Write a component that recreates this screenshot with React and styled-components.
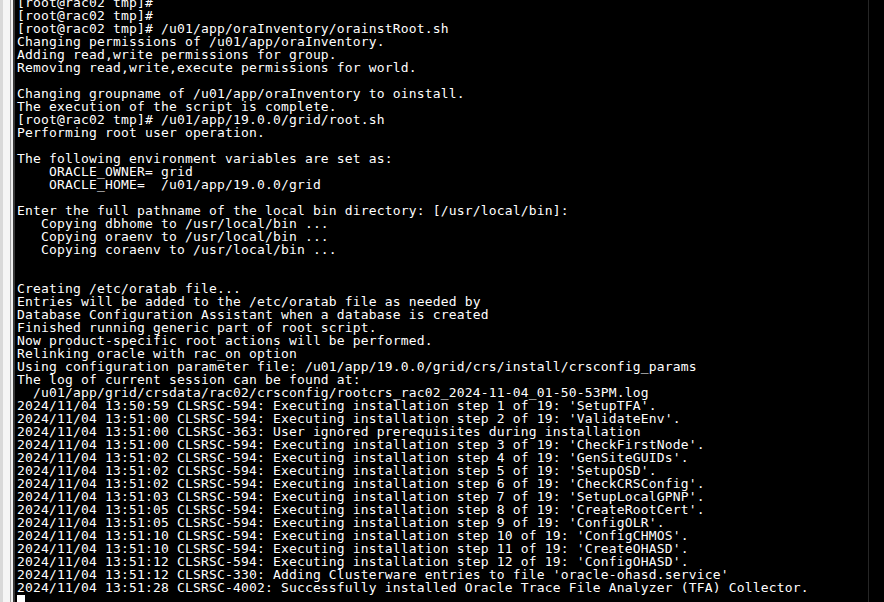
import React from "react";
import styled, { createGlobalStyle } from "styled-components";

const GlobalStyle = createGlobalStyle`
  *, *::before, *::after { box-sizing: border-box; }
  html, body {
    margin: 0;
    padding: 0;
    background: #000;
    overflow: hidden;
  }
`;

const Window = styled.div`
  display: flex;
  width: 884px;
  height: 602px;
  overflow: hidden;
  background: #000;
`;

// session tab frame on the left edge of the terminal window
const Frame = styled.div`
  flex: 0 0 15px;
  background: linear-gradient(
    to right,
    #d9d9d9 0 3px,
    #f5f5f5 3px 10px,
    #a0a0a0 10px 11px,
    #f0f0f0 11px 13px,
    #3a3a3a 13px 15px
  );
`;

const Screen = styled.section`
  flex: 0 0 854px;
  padding-left: 2px;
  overflow: hidden;
  border-right: 1px solid #262626;
  color: #fff;
  font-family: "DejaVu Sans Mono", "Liberation Mono", monospace;
  font-size: 13px;
  letter-spacing: 0.17px;
  line-height: 13px;
`;

const Scroll = styled.div`
  margin-top: -4px;
`;

const Line = styled.div`
  white-space: pre;
  height: 13px;
`;

const Cursor = styled.span`
  display: inline-block;
  width: 8px;
  height: 12px;
  margin-top: 1px;
  vertical-align: top;
  background: #fff;
`;

const steps = [
  ["13:50:59", 1, "SetupTFA"],
  ["13:51:00", 2, "ValidateEnv"],
  null,
  ["13:51:00", 3, "CheckFirstNode"],
  ["13:51:02", 4, "GenSiteGUIDs"],
  ["13:51:02", 5, "SetupOSD"],
  ["13:51:02", 6, "CheckCRSConfig"],
  ["13:51:03", 7, "SetupLocalGPNP"],
  ["13:51:05", 8, "CreateRootCert"],
  ["13:51:05", 9, "ConfigOLR"],
  ["13:51:10", 10, "ConfigCHMOS"],
  ["13:51:10", 11, "CreateOHASD"],
  ["13:51:12", 12, "ConfigOHASD"],
];

const output = [
  "[root@rac02 tmp]#",
  "[root@rac02 tmp]#",
  "[root@rac02 tmp]# /u01/app/oraInventory/orainstRoot.sh",
  "Changing permissions of /u01/app/oraInventory.",
  "Adding read,write permissions for group.",
  "Removing read,write,execute permissions for world.",
  "",
  "Changing groupname of /u01/app/oraInventory to oinstall.",
  "The execution of the script is complete.",
  "[root@rac02 tmp]# /u01/app/19.0.0/grid/root.sh",
  "Performing root user operation.",
  "",
  "The following environment variables are set as:",
  "    ORACLE_OWNER= grid",
  "    ORACLE_HOME=  /u01/app/19.0.0/grid",
  "",
  "Enter the full pathname of the local bin directory: [/usr/local/bin]:",
  "   Copying dbhome to /usr/local/bin ...",
  "   Copying oraenv to /usr/local/bin ...",
  "   Copying coraenv to /usr/local/bin ...",
  "",
  "",
  "Creating /etc/oratab file...",
  "Entries will be added to the /etc/oratab file as needed by",
  "Database Configuration Assistant when a database is created",
  "Finished running generic part of root script.",
  "Now product-specific root actions will be performed.",
  "Relinking oracle with rac_on option",
  "Using configuration parameter file: /u01/app/19.0.0/grid/crs/install/crsconfig_params",
  "The log of current session can be found at:",
  "  /u01/app/grid/crsdata/rac02/crsconfig/rootcrs_rac02_2024-11-04_01-50-53PM.log",
  ...steps.map((s) =>
    s
      ? `2024/11/04 ${s[0]} CLSRSC-594: Executing installation step ${s[1]} of 19: '${s[2]}'.`
      : "2024/11/04 13:51:00 CLSRSC-363: User ignored prerequisites during installation"
  ),
  "2024/11/04 13:51:12 CLSRSC-330: Adding Clusterware entries to file 'oracle-ohasd.service'",
  "2024/11/04 13:51:28 CLSRSC-4002: Successfully installed Oracle Trace File Analyzer (TFA) Collector.",
];

export default function App() {
  return (
    <Window>
      <GlobalStyle />
      <Frame />
      <Screen>
        <Scroll>
          {output.map((text, i) => (
            <Line key={i}>{text}</Line>
          ))}
          <Line>
            <Cursor />
          </Line>
        </Scroll>
      </Screen>
    </Window>
  );
}
